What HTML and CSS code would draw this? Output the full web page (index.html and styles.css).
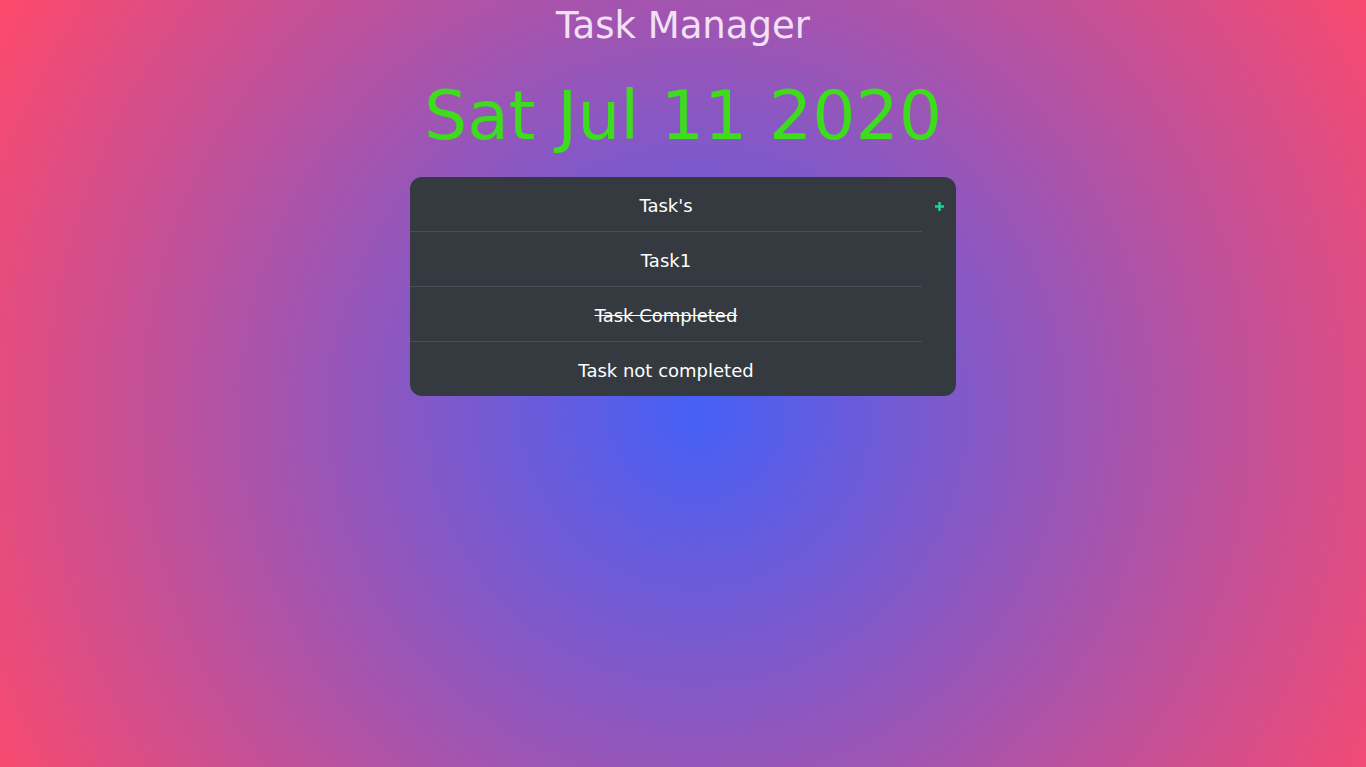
FILE: index.html
```html
<!DOCTYPE html>
<html lang="en">
<head>
<meta charset="utf-8">
<title>Task Manager</title>
<link rel="stylesheet" href="styles.css">
</head>
<body>
<main class="page">
  <h1 class="title">Task Manager</h1>
  <div class="date">Sat Jul 11 2020</div>
  <section class="card">
    <ul class="tasks">
      <li class="task task-head">Task's</li>
      <li class="task">Task1</li>
      <li class="task task-done">Task Completed</li>
      <li class="task">Task not completed</li>
    </ul>
    <div class="actions">
      <button class="add" type="button" aria-label="Add task">
        <svg width="9" height="9" viewBox="0 0 9 9"><rect x="3.3" y="0" width="2.4" height="9" fill="#1fd6a0"/><rect x="0" y="3.3" width="9" height="2.4" fill="#1fd6a0"/></svg>
      </button>
    </div>
  </section>
</main>
</body>
</html>
```
FILE: styles.css
```css
html, body {
  margin: 0;
  padding: 0;
  height: 100%;
}
body {
  font-family: "Comic Sans MS", "DejaVu Sans", sans-serif;
  background: radial-gradient(circle farthest-corner at 51% 54%, #4560f6 0%, #fe496b 100%);
  background-attachment: fixed;
}
.page {
  display: flex;
  flex-direction: column;
  align-items: center;
}
.title {
  margin: 0;
  font-family: "DejaVu Sans", sans-serif;
  font-weight: normal;
  font-size: 37px;
  line-height: 52px;
  color: #f3e1f3;
}
.date {
  margin-top: 22px;
  font-family: "DejaVu Sans", sans-serif;
  font-size: 68px;
  line-height: 84px;
  color: #3ddc1c;
}
.card {
  margin-top: 19px;
  width: 546px;
  display: flex;
  background: #343a40;
  border-radius: 12px;
  overflow: hidden;
}
.tasks {
  flex: 1;
  list-style: none;
  margin: 0;
  padding: 0;
}
.task {
  height: 54px;
  padding-top: 2px;
  box-sizing: border-box;
  height: 55px;
  display: flex;
  align-items: center;
  justify-content: center;
  font-family: "DejaVu Sans", sans-serif;
  font-size: 18px;
  color: #fff;
  border-bottom: 1px solid #474e56;
}
.task:last-child {
  border-bottom: none;
  height: 54px;
}
.task-done {
  text-decoration: line-through;
}
.actions {
  width: 34px;
  display: flex;
  flex-direction: column;
  align-items: center;
}
.add {
  height: 55px;
  width: 34px;
  padding: 4px 0 0;
  border: none;
  background: transparent;
  display: flex;
  align-items: center;
  justify-content: center;
  cursor: pointer;
}
```
